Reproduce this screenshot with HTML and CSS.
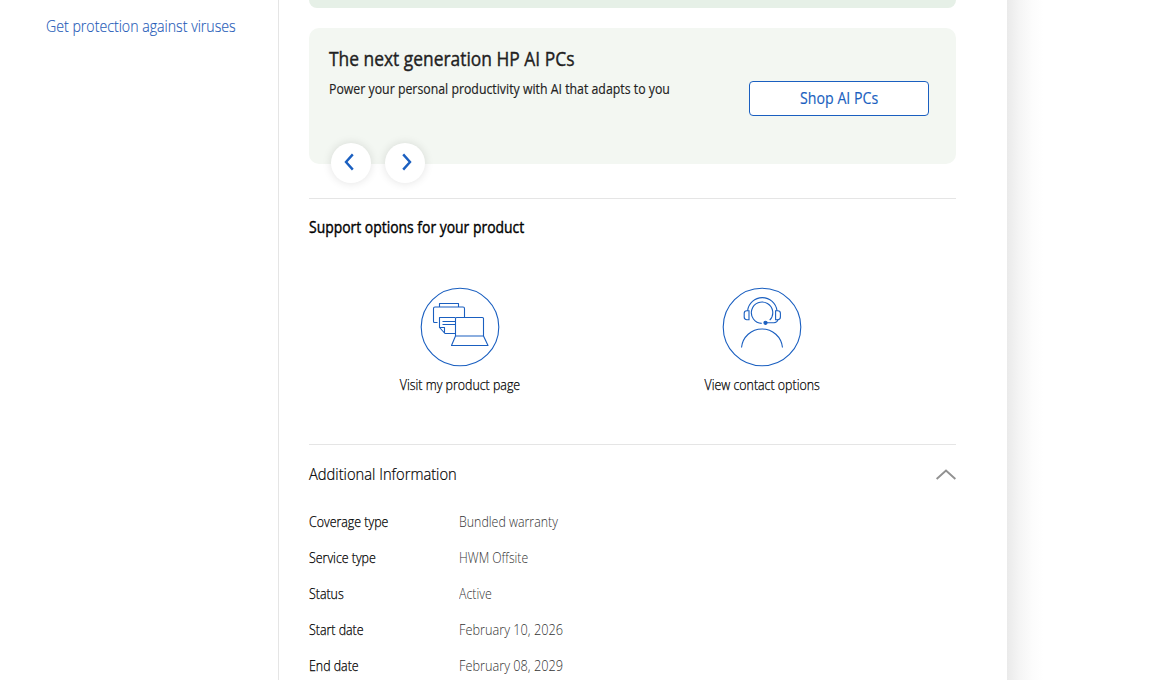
FILE: index.html
```html
<!DOCTYPE html>
<html lang="en">
<head>
  <meta charset="UTF-8">
  <meta name="viewport" content="width=device-width, initial-scale=1.0">
  <title>Warranty details</title>
  <link rel="stylesheet" href="styles.css">
</head>
<body>
  <div class="page">
    <aside class="sidebar">
      <a class="side-link" href="#">Get protection against viruses</a>
    </aside>

    <main class="content">
      <div class="banner banner-top"></div>

      <section class="banner promo">
        <div class="promo-text">
          <h2 class="promo-title">The next generation HP AI PCs</h2>
          <p class="promo-desc">Power your personal productivity with AI that adapts to you</p>
        </div>
        <a class="shop-btn" href="#"><span>Shop AI PCs</span></a>
        <div class="carousel-nav">
          <button class="nav-btn" aria-label="Previous">
            <svg width="40" height="40" viewBox="0 0 40 40" fill="none" stroke="currentColor" stroke-width="2.4">
              <path d="M21.8 11.4 15 19l6.8 7.6"></path>
            </svg>
          </button>
          <button class="nav-btn" aria-label="Next">
            <svg width="40" height="40" viewBox="0 0 40 40" fill="none" stroke="currentColor" stroke-width="2.4">
              <path d="M18.2 11.4 25 19l-6.8 7.6"></path>
            </svg>
          </button>
        </div>
      </section>

      <section class="support">
        <h3 class="support-title">Support options for your product</h3>
        <div class="options">
          <a class="option" href="#">
            <svg width="80" height="80" viewBox="0 0 80 80" fill="none" stroke="currentColor" stroke-width="1.1" stroke-linejoin="round">
              <circle cx="40" cy="40" r="38.8"></circle>
              <path d="M19.5 20v-3.5h19V20"></path>
              <path d="M17.5 35.5h-3a1 1 0 0 1-1-1v-13A1.5 1.5 0 0 1 15 20h28a1.500 1.500 0 0 1 1.500 1.500V30"></path>
              <path d="M35.500 30.500h-16v10l5.500 6h10.500M19.500 40.500h5v5.500M22.500 34.500h13M22.500 37.500h13"></path>
              <path d="M35.500 49V31.500a1 1 0 0 1 1-1h26a1 1 0 0 1 1 1V49z"></path>
              <path d="m35.500 49-4 9.500H68L63.500 49"></path>
            </svg>
            <span>Visit my product page</span>
          </a>
          <a class="option" href="#">
            <svg width="80" height="80" viewBox="0 0 80 80" fill="none" stroke="currentColor" stroke-width="1.1">
              <circle cx="40" cy="40" r="38.8"></circle>
              <path d="M39.7 36.400a10.700 10.700 0 1 1 8-3.200"></path>
              <path d="M25.600 23.700a14.800 14.800 0 0 1 29.400 0"></path>
              <path d="M27 23.700v9h-2.200a2.600 2.600 0 0 1-2.600-2.600v-3.800a2.600 2.600 0 0 1 2.600-2.600zM53.600 23.700v9h2.200a2.600 2.600 0 0 0 2.600-2.600v-3.800a2.600 2.600 0 0 0-2.600-2.600z"></path>
              <path d="M56 32.700c-.6 2-2 3-4 3h-8"></path>
              <circle cx="43.500" cy="35.800" r="1.600" fill="currentColor"></circle>
              <path d="M19.500 60.500a20.600 20.600 0 0 1 41 0"></path>
            </svg>
            <span>View contact options</span>
          </a>
        </div>
      </section>

      <section class="info">
        <div class="info-head">
          <h3 class="info-title">Additional Information</h3>
          <svg width="20" height="12" viewBox="0 0 20 12" fill="none" stroke="currentColor" stroke-width="2">
            <path d="M.6 11 10 2.500l9.400 8.500"></path>
          </svg>
        </div>
        <dl class="info-list">
          <dt>Coverage type</dt>
          <dd>Bundled warranty</dd>
          <dt>Service type</dt>
          <dd class="service">HWM Offsite</dd>
          <dt>Status</dt>
          <dd>Active</dd>
          <dt>Start date</dt>
          <dd class="date">February 10, 2026</dd>
          <dt>End date</dt>
          <dd class="date">February 08, 2029</dd>
        </dl>
      </section>
    </main>

    <div class="page-edge"></div>
  </div>
</body>
</html>
```
FILE: styles.css
```css
:root {
  --blue: #1a5fc0;
  --link: #1f5bb8;
  --line: #e5e5e5;
}

* {
  margin: 0;
  padding: 0;
  box-sizing: border-box;
}

body {
  font-family: "Open Sans", "Noto Sans", sans-serif;
  color: #000;
  background-color: #fff;
  overflow: hidden;
}

a {
  color: inherit;
  text-decoration: none;
}

.page {
  display: flex;
  height: 680px;
  overflow: hidden;
}

/* semi-condensed text */
.side-link,
.promo-title,
.promo-desc,
.support-title,
.info-title,
.info-list dt,
.info-list dd {
  transform: scaleX(0.885);
  transform-origin: left center;
}

.shop-btn span,
.option span {
  transform: scaleX(0.885);
}

.sidebar {
  width: 279px;
  flex-shrink: 0;
  padding: 14px 0 0 46px;
  border-right: 1px solid var(--line);
}

.side-link {
  display: block;
  font-size: 16px;
  font-weight: 300;
  line-height: 24px;
  color: var(--link);
  white-space: nowrap;
  -webkit-text-stroke: 0.15px;
}

.content {
  width: 728px;
  flex-shrink: 0;
  padding: 0 51px 0 30px;
}

.page-edge {
  width: 36px;
  background: linear-gradient(to right, #eaeaea, #f5f5f5 35%, #fcfcfc 70%, #fff);
}

.banner {
  border-radius: 10px;
}

.banner-top {
  height: 8px;
  border-radius: 0 0 10px 10px;
  background-color: #e6f0e7;
}

.promo {
  position: relative;
  display: flex;
  justify-content: space-between;
  height: 136px;
  margin-top: 20px;
  padding: 17px 27px 0 20px;
  background-color: #f3f7f2;
}

.promo-text {
  width: 400px;
}

.promo-title {
  font-size: 20px;
  font-weight: 400;
  line-height: 28px;
  color: #212121;
  white-space: nowrap;
  transform: scaleX(0.87);
  -webkit-text-stroke: 0.4px;
}

.promo-desc {
  margin-top: 6px;
  font-size: 14px;
  line-height: 20px;
  color: #212121;
  white-space: nowrap;
  transform: scaleX(0.88);
  -webkit-text-stroke: 0.15px;
}

.shop-btn {
  display: flex;
  align-items: center;
  justify-content: center;
  width: 180px;
  height: 35px;
  margin-top: 36px;
  padding-bottom: 2px;
  border: 1px solid var(--blue);
  border-radius: 4px;
  background-color: #fff;
  color: var(--blue);
  font-size: 16px;
  -webkit-text-stroke: 0.15px;
}

.carousel-nav {
  position: absolute;
  left: 22px;
  bottom: -19px;
  display: flex;
  gap: 14px;
}

.nav-btn {
  width: 40px;
  height: 40px;
  border: none;
  border-radius: 50%;
  background-color: #fff;
  color: var(--blue);
  box-shadow: 0 0 10px rgba(0, 0, 0, 0.12);
}

.support {
  height: 246px;
  margin-top: 34px;
  padding-top: 16px;
  border-top: 1px solid var(--line);
}

.support-title {
  font-size: 16px;
  font-weight: 400;
  line-height: 24px;
  transform: scaleX(0.87);
  -webkit-text-stroke: 0.4px;
}

.options {
  display: grid;
  grid-template-columns: 302px 302px;
  margin-top: 48px;
}

.option {
  display: flex;
  flex-direction: column;
  align-items: center;
  font-size: 14px;
  font-weight: 300;
  line-height: 20px;
  white-space: nowrap;
  -webkit-text-stroke: 0.25px;
}

.option svg {
  margin-bottom: 8px;
  color: var(--blue);
}

.info {
  padding-top: 17px;
  border-top: 1px solid var(--line);
}

.info-head {
  display: flex;
  align-items: center;
  justify-content: space-between;
  color: #919191;
}

.info-title {
  font-size: 16px;
  font-weight: 300;
  line-height: 24px;
  color: #000;
  transform: scaleX(0.92);
  -webkit-text-stroke: 0.2px;
}

.info-list {
  display: grid;
  grid-template-columns: 150px 1fr;
  grid-auto-rows: 36px;
  align-items: center;
  margin-top: 18px;
  font-size: 14px;
  line-height: 20px;
  font-weight: 300;
}

.info-list dt {
  -webkit-text-stroke: 0.25px;
}

.info-list dd {
  color: #333;
}

.info-list .service {
  transform: scaleX(0.87);
}

.info-list .date {
  transform: scaleX(0.91);
}
```
